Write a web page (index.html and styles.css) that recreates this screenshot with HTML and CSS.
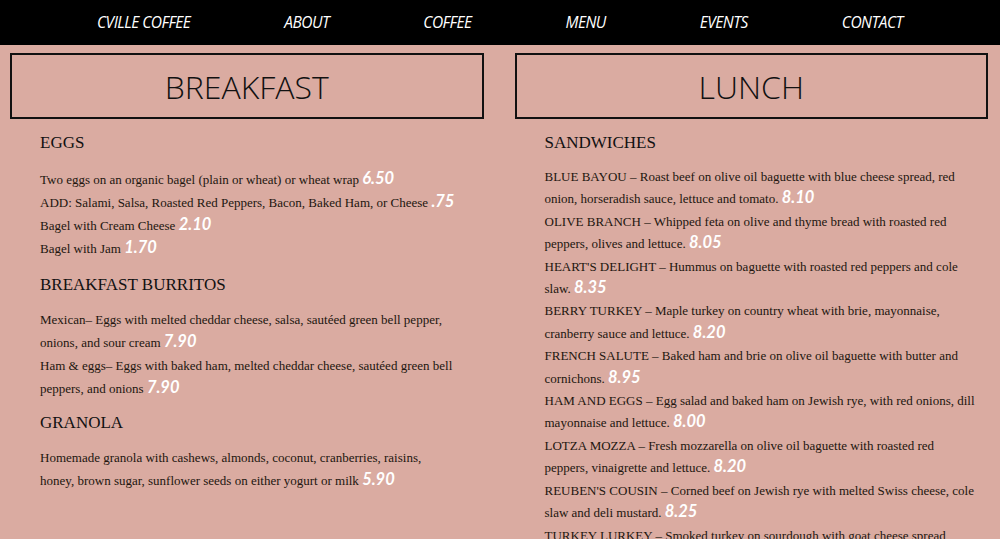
FILE: index.html
```html
<!DOCTYPE html>
<html lang="en">
<head>
<meta charset="utf-8">
<title>Cville Coffee - Menu</title>
<link rel="stylesheet" href="styles.css">
</head>
<body>
<nav class="topnav">
  <ul class="nav-list">
    <li><a href="#">CVILLE COFFEE</a></li>
    <li><a href="#">ABOUT</a></li>
    <li><a href="#">COFFEE</a></li>
    <li><a href="#">MENU</a></li>
    <li><a href="#">EVENTS</a></li>
    <li><a href="#">CONTACT</a></li>
  </ul>
</nav>
<main class="menu">
  <section class="column column-breakfast">
    <h1 class="title-box">BREAKFAST</h1>
    <div class="content">
      <h2 class="cat cat-lead">EGGS</h2>
      <p class="item">Two eggs on an organic bagel (plain or wheat) or wheat wrap <span class="price">6.50</span></p>
      <p class="item">ADD: Salami, Salsa, Roasted Red Peppers, Bacon, Baked Ham, or Cheese <span class="price">.75</span></p>
      <p class="item">Bagel with Cream Cheese <span class="price">2.10</span></p>
      <p class="item">Bagel with Jam <span class="price">1.70</span></p>
      <h2 class="cat cat-next">BREAKFAST BURRITOS</h2>
      <p class="item">Mexican– Eggs with melted cheddar cheese, salsa, sautéed green bell pepper,<br>onions, and sour cream <span class="price">7.90</span></p>
      <p class="item">Ham &amp; eggs– Eggs with baked ham, melted cheddar cheese, sautéed green bell<br>peppers, and onions <span class="price">7.90</span></p>
      <h2 class="cat">GRANOLA</h2>
      <p class="item">Homemade granola with cashews, almonds, coconut, cranberries, raisins,<br>honey, brown sugar, sunflower seeds on either yogurt or milk <span class="price">5.90</span></p>
    </div>
  </section>
  <section class="column column-lunch">
    <h1 class="title-box">LUNCH</h1>
    <div class="content">
      <h2 class="cat">SANDWICHES</h2>
      <p class="item">BLUE BAYOU – Roast beef on olive oil baguette with blue cheese spread, red<br>onion, horseradish sauce, lettuce and tomato. <span class="price">8.10</span></p>
      <p class="item">OLIVE BRANCH – Whipped feta on olive and thyme bread with roasted red<br>peppers, olives and lettuce. <span class="price">8.05</span></p>
      <p class="item">HEART'S DELIGHT – Hummus on baguette with roasted red peppers and cole<br>slaw. <span class="price">8.35</span></p>
      <p class="item">BERRY TURKEY – Maple turkey on country wheat with brie, mayonnaise,<br>cranberry sauce and lettuce. <span class="price">8.20</span></p>
      <p class="item">FRENCH SALUTE – Baked ham and brie on olive oil baguette with butter and<br>cornichons. <span class="price">8.95</span></p>
      <p class="item">HAM AND EGGS – Egg salad and baked ham on Jewish rye, with red onions, dill<br>mayonnaise and lettuce. <span class="price">8.00</span></p>
      <p class="item">LOTZA MOZZA – Fresh mozzarella on olive oil baguette with roasted red<br>peppers, vinaigrette and lettuce. <span class="price">8.20</span></p>
      <p class="item">REUBEN'S COUSIN – Corned beef on Jewish rye with melted Swiss cheese, cole<br>slaw and deli mustard. <span class="price">8.25</span></p>
      <p class="item">TURKEY LURKEY – Smoked turkey on sourdough with goat cheese spread,<br>cucumbers, tomato and lettuce. <span class="price">8.15</span></p>
    </div>
  </section>
</main>
</body>
</html>
```

FILE: styles.css
```css
html, body {
  margin: 0;
  padding: 0;
}

body {
  background: #daaba1;
  color: #22160f;
  font-family: "Liberation Serif", "Times New Roman", serif;
}

.topnav {
  background: #000;
  height: 45px;
}

.nav-list {
  list-style: none;
  margin: 0;
  padding: 0 0 0 97px;
  display: flex;
  gap: 94px;
  height: 45px;
  align-items: center;
}

.nav-list a {
  color: #fff;
  text-decoration: none;
  font-family: "Open Sans", "Liberation Sans", sans-serif;
  font-style: italic;
  font-size: 15.5px;
  letter-spacing: -0.5px;
  display: block;
  padding-bottom: 1px;
}

.menu {
  display: grid;
  grid-template-columns: 1fr 1fr;
  column-gap: 31px;
  padding: 8px 12px 0 10px;
}

.column {
  min-width: 0;
}

.title-box {
  margin: 0 0 13px;
  height: 62px;
  border: 2px solid #111;
  display: flex;
  align-items: center;
  justify-content: center;
  font-family: "Open Sans", "Liberation Sans", sans-serif;
  font-weight: 300;
  font-size: 32px;
  color: #111;
}

.content {
  padding-left: 30px;
  white-space: nowrap;
}

.cat {
  font-family: "Liberation Serif", "Times New Roman", serif;
  font-weight: 400;
  font-size: 17px;
  line-height: 22px;
  margin: 12px 0 12px;
  color: #111;
}

.cat-lead {
  margin-bottom: 14px;
}

.cat-next {
  margin-top: 14px;
}

.item {
  margin: 0;
  font-size: 13px;
  line-height: 23px;
}

.column-lunch .item {
  line-height: 22.4px;
}

.price {
  font-family: Lato, "Open Sans", sans-serif;
  font-weight: 700;
  font-style: italic;
  font-size: 16.5px;
  line-height: 1;
  color: #fff;
}
```
